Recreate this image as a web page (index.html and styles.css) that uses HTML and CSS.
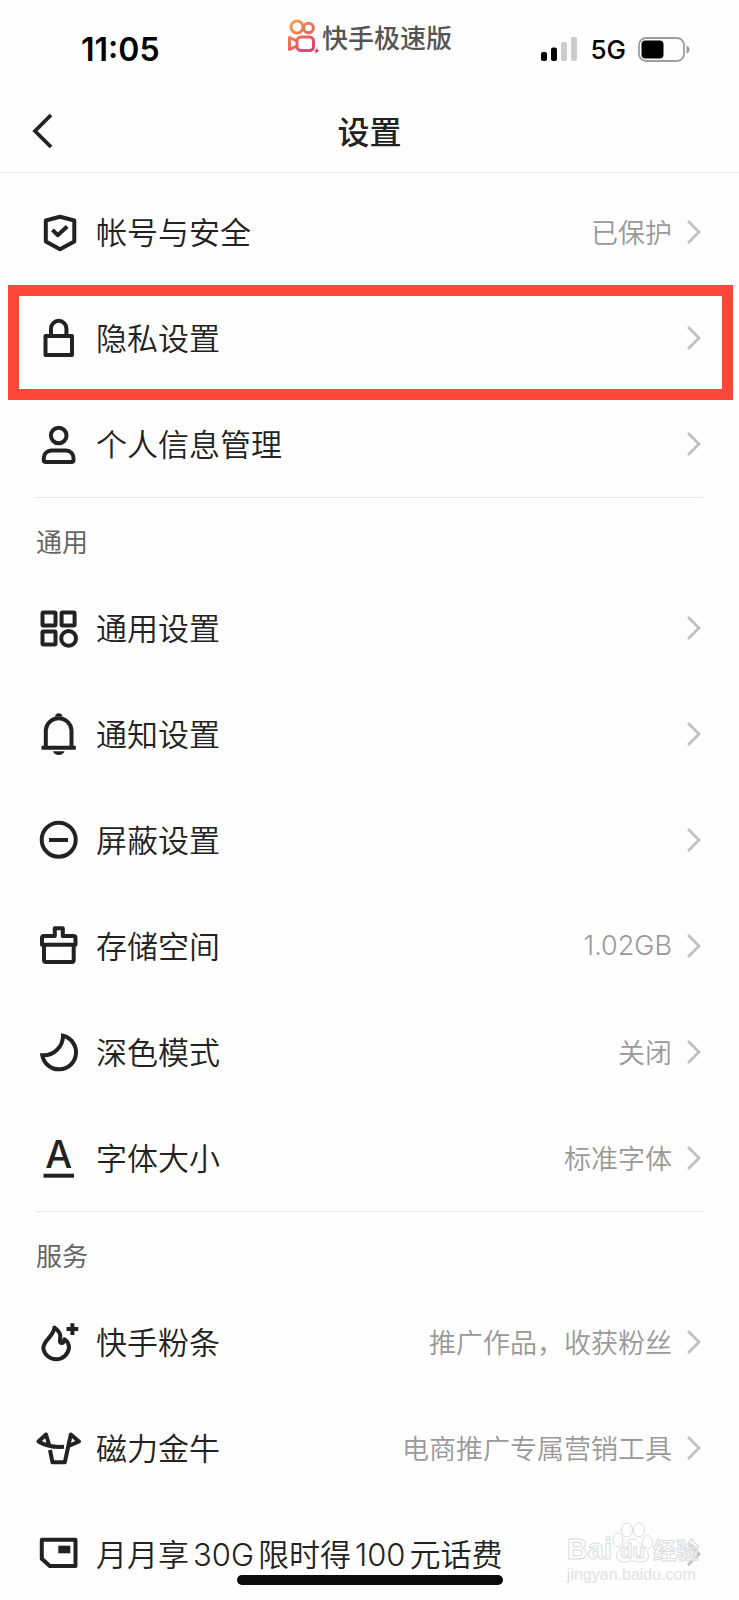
FILE: index.html
```html
<!DOCTYPE html>
<html lang="zh-CN">
<head>
  <meta charset="utf-8">
  <meta name="viewport" content="width=device-width, initial-scale=1">
  <title>设置</title>
  <link rel="stylesheet" href="styles.css">
</head>
<body>
  <svg width="0" height="0" class="defs">
    <symbol id="chevron" viewBox="0 0 16 24">
      <path d="M1 1L12 12L1 23" fill="none" stroke="#c0c0c0" stroke-width="2.8"/>
    </symbol>
  </svg>

  <div class="screen">
    <!-- status bar -->
    <div class="status-bar">
      <span class="time">11:05</span>
      <div class="brand">
        <svg width="34" height="36" viewBox="0 0 34 36" fill="none">
          <defs>
            <linearGradient id="brandColor" gradientUnits="userSpaceOnUse" x1="4" y1="2" x2="28" y2="34">
              <stop offset="0" stop-color="#f0a848"/>
              <stop offset="0.5" stop-color="#e96a5c"/>
              <stop offset="1" stop-color="#d8357c"/>
            </linearGradient>
          </defs>
          <g stroke="url(#brandColor)" stroke-width="3">
            <circle cx="10" cy="9" r="6"/>
            <circle cx="21.5" cy="10" r="4.8"/>
            <rect x="10" y="19" width="16.5" height="13.5" rx="4"/>
            <path d="M10 23L2.5 19.5V31.5L10 28" stroke-linejoin="round"/>
          </g>
          <path d="M31 29L27 33.500H29L28 36L32.500 32H30Z" fill="#d8357c"/>
        </svg>
        <span>快手极速版</span>
      </div>
      <div class="phone-state">
        <svg width="37" height="24" viewBox="0 0 37 24">
          <rect x="0" y="15" width="6" height="9" rx="2"/>
          <rect x="10" y="10.500" width="6" height="13.500" rx="2"/>
          <rect x="20" y="5" width="6" height="19" rx="2" fill="#ccc"/>
          <rect x="30" y="0" width="6" height="24" rx="2" fill="#ccc"/>
        </svg>
        <span>5G</span>
        <svg width="52" height="25" viewBox="0 0 52 25">
          <rect x="1" y="1" width="45" height="23" rx="7" fill="none" stroke="#9d9d9d" stroke-width="1.800"/>
          <rect x="3.500" y="3.500" width="22" height="18" rx="4"/>
          <path d="M48.500 8.500Q51.500 9.500 51.500 12.500Q51.500 15.500 48.500 16.500Z" fill="#9d9d9d"/>
        </svg>
      </div>
    </div>

    <header class="nav">
      <button class="back" type="button" aria-label="返回">
        <svg width="21" height="36" viewBox="0 0 21 36" fill="none" stroke="#222" stroke-width="3.800">
          <path d="M19 2L3 18L19 34"/>
        </svg>
      </button>
      <h1>设置</h1>
    </header>

    <main>
      <section class="group">
        <a class="row" href="#account">
          <svg class="icon" viewBox="0 0 46 46">
            <path d="M24 7.800L38.300 11.500V32.500L24 40.200L9.800 32.500V11.500Z"/>
            <path d="M16.500 20.800L21.700 26.200L31.200 17.500"/>
          </svg>
          <span class="label">帐号与安全</span>
          <span class="value">已保护</span>
          <svg class="chevron"><use href="#chevron"/></svg>
        </a>
        <a class="row marked" href="#privacy">
          <svg class="icon" viewBox="0 0 46 46">
            <rect x="9.500" y="21" width="26.500" height="19"/>
            <path d="M15 21V13.500A7.700 7.700 0 0 1 30.400 13.500V21"/>
          </svg>
          <span class="label">隐私设置</span>
          <svg class="chevron"><use href="#chevron"/></svg>
        </a>
        <a class="row" href="#profile">
          <svg class="icon" viewBox="0 0 46 46">
            <circle cx="22.700" cy="14.500" r="7.800"/>
            <path d="M15.500 29.500H30A7.500 7.500 0 0 1 37.500 37V39A2 2 0 0 1 35.500 41H9.800A2 2 0 0 1 7.800 39V37A7.500 7.500 0 0 1 15.500 29.500Z"/>
          </svg>
          <span class="label">个人信息管理</span>
          <svg class="chevron"><use href="#chevron"/></svg>
        </a>
      </section>

      <section class="group">
        <h2>通用</h2>
        <a class="row" href="#general">
          <svg class="icon" viewBox="0 0 46 46">
            <rect x="6.500" y="7.500" width="13" height="13" rx="1"/>
            <rect x="25.600" y="7.500" width="13" height="13" rx="1"/>
            <rect x="6.500" y="26.500" width="13" height="13" rx="1"/>
            <circle cx="32.600" cy="33.400" r="7.400"/>
          </svg>
          <span class="label">通用设置</span>
          <svg class="chevron"><use href="#chevron"/></svg>
        </a>
        <a class="row" href="#notice">
          <svg class="icon" viewBox="0 0 46 46">
            <path d="M9.800 36V19A12.900 12.900 0 0 1 35.500 19V36"/>
            <path d="M5.500 36.800H39.800"/>
            <path class="solid" d="M19 5.500Q19.500 2.300 22.700 2.300T26.400 5.500Z"/>
            <path class="solid" d="M17 40.200H28.500Q27 44 22.700 44T17 40.200Z"/>
          </svg>
          <span class="label">通知设置</span>
          <svg class="chevron"><use href="#chevron"/></svg>
        </a>
        <a class="row" href="#block">
          <svg class="icon" viewBox="0 0 46 46">
            <circle cx="22.700" cy="22.700" r="17"/>
            <path d="M13 23H32"/>
          </svg>
          <span class="label">屏蔽设置</span>
          <svg class="chevron"><use href="#chevron"/></svg>
        </a>
        <a class="row" href="#storage">
          <svg class="icon" viewBox="0 0 46 46">
            <path d="M6 21.800V15A2 2 0 0 1 8 13H18.800V5.200H26.800V13H37.500A2 2 0 0 1 39.500 15V21.800Z"/>
            <path d="M8 21.800V37A2 2 0 0 0 10 39H35.700A2 2 0 0 0 37.700 37V21.800"/>
          </svg>
          <span class="label">存储空间</span>
          <span class="value">1.02GB</span>
          <svg class="chevron"><use href="#chevron"/></svg>
        </a>
        <a class="row" href="#dark">
          <svg class="icon" viewBox="0 0 46 46">
            <path class="sharp" d="M27 6.800A17 17 0 1 1 6.300 26.300A19.500 19.500 0 0 0 27 6.800Z"/>
          </svg>
          <span class="label">深色模式</span>
          <span class="value">关闭</span>
          <svg class="chevron"><use href="#chevron"/></svg>
        </a>
        <a class="row" href="#font">
          <svg class="icon" viewBox="0 0 46 46">
            <text class="solid letter" x="22.700" y="33" text-anchor="middle">A</text>
            <path d="M7.500 40.700H38"/>
          </svg>
          <span class="label">字体大小</span>
          <span class="value">标准字体</span>
          <svg class="chevron"><use href="#chevron"/></svg>
        </a>
      </section>

      <section class="group">
        <h2>服务</h2>
        <a class="row" href="#fentiao">
          <svg class="icon" viewBox="0 0 46 46">
            <path d="M18.500 8.500C24 12.500 25.300 16 24 20.500C23 25 27.500 25.500 28.300 20.200C31.800 22.500 33 26 33 29A13 13 0 0 1 7.300 29.500C7.300 20.500 17.500 18 18.500 8.500Z"/>
            <path d="M30.500 10H42.300M36.400 4.200V16"/>
          </svg>
          <span class="label">快手粉条</span>
          <span class="value">推广作品，收获粉丝</span>
          <svg class="chevron"><use href="#chevron"/></svg>
        </a>
        <a class="row" href="#jinniu">
          <svg class="icon" viewBox="0 0 46 46">
            <path d="M13.300 20.500L10 9.500L2.500 16.500C9 20.500 18 22.500 28 21.800"/>
            <path d="M14 25L16.500 37.300H28.800L34.800 9.500L43 16.500L32.500 21"/>
          </svg>
          <span class="label">磁力金牛</span>
          <span class="value">电商推广专属营销工具</span>
          <svg class="chevron"><use href="#chevron"/></svg>
        </a>
        <a class="row" href="#plan">
          <svg class="icon" viewBox="0 0 46 46">
            <path d="M5.800 8.800H39.500V35H13.800L5.800 27.700Z"/>
            <rect class="solid" x="22.300" y="14.700" width="12" height="7.600"/>
          </svg>
          <span class="label">月月享<span class="num">30G</span>限时得<span class="num">100</span>元话费</span>
          <svg class="chevron"><use href="#chevron"/></svg>
        </a>
      </section>
    </main>

    <div class="watermark">
      <div class="mark">
        <span class="bai">Bai</span>
        <svg width="41" height="42" viewBox="0 0 41 42">
          <ellipse cx="6" cy="18" rx="5" ry="7"/>
          <ellipse cx="15" cy="8" rx="5.500" ry="7"/>
          <ellipse cx="27" cy="8" rx="5.500" ry="7"/>
          <ellipse cx="35.500" cy="20" rx="5" ry="6.500"/>
          <path d="M20.500 17C27 17 29 24 34 28C39 33 36 40 30 40C26 40 24 39 20.500 39S15 40 11 40C5 40 2 33 7 28C12 24 14 17 20.500 17Z"/>
          <text x="20.500" y="36" text-anchor="middle">du</text>
        </svg>
        <span class="jingyan">经验</span>
      </div>
      <span class="site">jingyan.baidu.com</span>
    </div>
    <div class="home-bar"></div>
  </div>
</body>
</html>
```

FILE: styles.css
```css
*{
  box-sizing: border-box;
}
body{
  margin: 0;
  background-color: #fefefe;
  color: #222;
  font-family: "Inter", "Noto Sans CJK SC", sans-serif;
}
.defs{
  position: absolute;
}
.screen{
  position: relative;
  height: 100vh;
  overflow: hidden;
}

/* status bar */
.status-bar{
  display: grid;
  grid-template-columns: 1fr auto 1fr;
  align-items: center;
  height: 90px;
  padding: 8px 49px 0;
  color: #000;
}
.time{
  padding-left: 32px;
  font-size: 32px;
  font-weight: 600;
}
.brand{
  display: flex;
  align-items: center;
  align-self: start;
  gap: 1px;
  height: 56px;
  color: #555;
  font-size: 26px;
  font-weight: 500;
}
.phone-state{
  display: flex;
  align-items: center;
  justify-content: flex-end;
  gap: 12px;
  font-size: 26px;
  font-weight: 500;
}

/* title bar */
.nav{
  display: grid;
  grid-template-columns: 1fr auto 1fr;
  align-items: center;
  height: 83px;
  padding: 0 32px;
  border-bottom: 1px solid #ebebeb;
}
.nav h1{
  margin: 0;
  padding-bottom: 3px;
  font-size: 32px;
  font-weight: 500;
}
.back{
  display: flex;
  justify-self: start;
  padding: 0;
  border: none;
  background: none;
}

/* settings list */
main{
  padding-top: 6px;
}
.group + .group::before{
  content: "";
  display: block;
  height: 1px;
  margin: 0 36px;
  background-color: #e8e8e8;
}
.group h2{
  height: 77px;
  margin: 0;
  padding: 0 36px;
  color: #666;
  font-size: 26px;
  font-weight: 400;
  line-height: 90px;
}
.row{
  position: relative;
  display: flex;
  align-items: center;
  height: 106px;
  padding: 0 36px;
  color: #222;
  text-decoration: none;
}
.marked::after{
  content: "";
  position: absolute;
  top: 0;
  right: 6px;
  bottom: -9px;
  left: 8px;
  border: 11px solid #fb483b;
}
.icon{
  width: 46px;
  height: 46px;
  margin-right: 14px;
  overflow: visible;
  fill: none;
  stroke: #222;
  stroke-width: 4;
  stroke-linejoin: round;
}
.icon .solid{
  fill: #222;
  stroke: none;
}
.icon .sharp{
  stroke-linejoin: miter;
}
.icon .letter{
  font-size: 38px;
  font-weight: 500;
}
.label{
  flex: 1;
  padding-bottom: 4px;
  font-size: 31px;
  font-weight: 350;
  white-space: nowrap;
}
.num{
  margin: 0 4px;
}
.value{
  padding-bottom: 2px;
  color: #999;
  font-size: 27px;
  font-weight: 350;
}
.chevron{
  width: 16px;
  height: 24px;
  margin-left: 15px;
}

/* overlays */
.watermark{
  position: absolute;
  right: 40px;
  bottom: 14px;
  color: rgba(255, 255, 255, 0.6);
  font-family: "Liberation Sans", "Noto Sans CJK SC", sans-serif;
  font-weight: 700;
  -webkit-text-stroke: 1px #dcdcdc;
}
.mark{
  display: flex;
  align-items: flex-end;
  height: 44px;
}
.mark svg{
  fill: rgba(255, 255, 255, 0.6);
  stroke: #dcdcdc;
}
.mark text{
  font-size: 20px;
}
.bai{
  font-size: 29px;
  line-height: 30px;
}
.jingyan{
  font-size: 23px;
  line-height: 26px;
}
.site{
  display: block;
  color: #e2e2e2;
  font-size: 16px;
  font-weight: 400;
  line-height: 22px;
  -webkit-text-stroke: 0;
}
.home-bar{
  position: absolute;
  bottom: 15px;
  left: 50%;
  width: 36%;
  height: 10px;
  border-radius: 5px;
  background-color: #0b0b0b;
  transform: translateX(-50%);
}
```
